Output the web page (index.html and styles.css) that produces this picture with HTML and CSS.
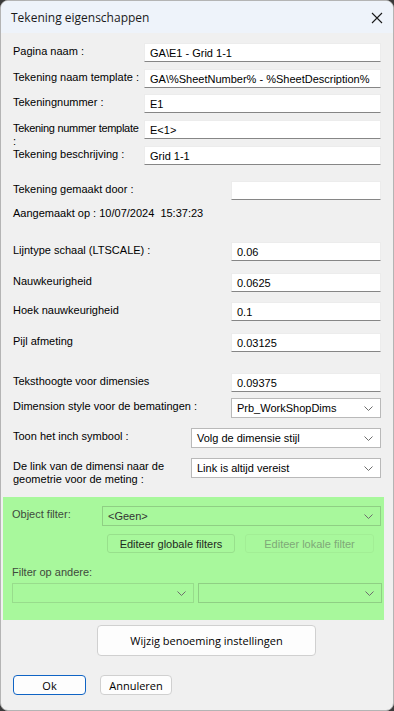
FILE: index.html
```html
<!DOCTYPE html>
<html>
<head>
	<meta charset="utf-8">
	<title>Tekening eigenschappen</title>
	<link rel="stylesheet" href="styles.css">
</head>
<body>
	<div class="window">
		<div class="titlebar">
			<span class="title">Tekening eigenschappen</span>
			<svg class="close" width="12" height="12" viewBox="0 0 12 12"><path d="M1 1L11 11M11 1L1 11"/></svg>
		</div>

		<div class="content">
			<!-- Pagina / tekening gegevens -->
			<div class="row wide first"><span class="label">Pagina naam :</span><div class="input">GA\E1 - Grid 1-1</div></div>
			<div class="row wide"><span class="label">Tekening naam template :</span><div class="input">GA\%SheetNumber% - %SheetDescription%</div></div>
			<div class="row wide tight"><span class="label">Tekeningnummer :</span><div class="input">E1</div></div>
			<div class="row wide"><span class="label"><span class="nowrap">Tekening nummer template</span><br>:</span><div class="input">E&lt;1&gt;</div></div>
			<div class="row wide"><span class="label">Tekening beschrijving :</span><div class="input">Grid 1-1</div></div>

			<div class="row narrow spaced"><span class="label">Tekening gemaakt door :</span><div class="input"></div></div>
			<div class="row info"><span class="label">Aangemaakt op : 10/07/2024&nbsp; 15:37:23</span></div>

			<!-- Dimensie instellingen -->
			<div class="row narrow spaced"><span class="label">Lijntype schaal (LTSCALE) :</span><div class="input">0.06</div></div>
			<div class="row narrow loose"><span class="label">Nauwkeurigheid</span><div class="input">0.0625</div></div>
			<div class="row narrow medium"><span class="label">Hoek nauwkeurigheid</span><div class="input">0.1</div></div>
			<div class="row narrow loose"><span class="label">Pijl afmeting</span><div class="input">0.03125</div></div>
			<div class="row narrow extra"><span class="label">Teksthoogte voor dimensies</span><div class="input">0.09375</div></div>
			<div class="row narrow tight tall"><span class="label">Dimension style voor de bematingen :</span>
				<div class="select boxed">Prb_WorkShopDims<svg class="chev" width="9" height="5" viewBox="0 0 9 5"><path d="M0.5 0.5L4.5 4.5L8.5 0.5"/></svg></div>
			</div>
			<div class="row mid medium tall"><span class="label">Toon het inch symbool :</span>
				<div class="select boxed">Volg de dimensie stijl<svg class="chev" width="9" height="5" viewBox="0 0 9 5"><path d="M0.5 0.5L4.5 4.5L8.5 0.5"/></svg></div>
			</div>
			<div class="row mid medium tall"><span class="label">De link van de dimensi naar de geometrie voor de meting :</span>
				<div class="select boxed">Link is altijd vereist<svg class="chev" width="9" height="5" viewBox="0 0 9 5"><path d="M0.5 0.5L4.5 4.5L8.5 0.5"/></svg></div>
			</div>

			<!-- Filters -->
			<div class="filters">
				<div class="filter-row">
					<span class="label">Object filter:</span>
					<div class="select green">&lt;Geen&gt;<svg class="chev" width="9" height="5" viewBox="0 0 9 5"><path d="M0.5 0.5L4.5 4.5L8.5 0.5"/></svg></div>
				</div>
				<div class="filter-buttons">
					<div class="gbtn">Editeer globale filters</div>
					<div class="gbtn disabled">Editeer lokale filter</div>
				</div>
				<div class="label other">Filter op andere:</div>
				<div class="filter-selects">
					<div class="select green faint"><svg class="chev" width="9" height="5" viewBox="0 0 9 5"><path d="M0.5 0.5L4.5 4.5L8.5 0.5"/></svg></div>
					<div class="select green"><svg class="chev" width="9" height="5" viewBox="0 0 9 5"><path d="M0.5 0.5L4.5 4.5L8.5 0.5"/></svg></div>
				</div>
			</div>

			<div class="btn big">Wijzig benoeming instellingen</div>

			<div class="actions">
				<div class="btn default">Ok</div>
				<div class="btn">Annuleren</div>
			</div>
		</div>
	</div>
</body>
</html>
```

FILE: styles.css
```css
body {
	margin: 0;
	padding: 0;
	background: #3a3a3a;
	font-family: Tahoma, "Liberation Sans", Arial, sans-serif;
	font-size: 11px;
	color: #000;
}

.window {
	width: 394px;
	height: 711px;
	box-sizing: border-box;
	border: 1px solid #b4b4b4;
	border-radius: 8px;
	background: #f0f0f0;
	overflow: hidden;
}

.titlebar {
	height: 32px;
	background: #eef3fa;
	display: flex;
	align-items: center;
	justify-content: space-between;
	padding: 0 10px 0 10px;
}

.title {
	font-family: "Open Sans", "Noto Sans", sans-serif;
	font-size: 12px;
	color: #1a1a1a;
}

.close {
	stroke: #1a1a1a;
	stroke-width: 1.1;
	margin-top: 1px;
}

.content {
	padding: 0 12px 0 12px;
}

/* vaste rijhoogte, labels mogen eronder uitlopen */
.row {
	display: grid;
	align-items: start;
	height: 19px;
	margin-top: 7px;
}

.row.tall { height: 20px; }

.row.first { margin-top: 10px; }
.row.tight { margin-top: 6px; }
.row.spaced { margin-top: 16px; }
.row.loose { margin-top: 12px; }
.row.medium { margin-top: 10px; }
.row.extra { margin-top: 21px; }

.row.wide { grid-template-columns: 131px 1fr; }
.row.narrow { grid-template-columns: 218px 1fr; }
.row.mid { grid-template-columns: 178px 1fr; }

.row.info {
	display: block;
}

.label {
	padding-top: 2px;
	line-height: 13px;
}

.nowrap {
	white-space: nowrap;
	letter-spacing: -0.3px;
}

.input {
	height: 19px;
	box-sizing: border-box;
	background: #fff;
	border: 1px solid #ececec;
	border-bottom: 1px solid #868686;
	padding: 3px 0 0 5px;
	line-height: 13px;
	white-space: nowrap;
	overflow: hidden;
}

.select {
	height: 20px;
	box-sizing: border-box;
	display: flex;
	align-items: center;
	justify-content: space-between;
	padding: 0 7px 0 5px;
	white-space: nowrap;
}

.select.boxed {
	background: #fff;
	border: 1px solid #b9b9b9;
}

.chev {
	fill: none;
	stroke: #6d6d6d;
	stroke-width: 1;
	margin-left: auto;
}

.filters {
	background: #a8f89c;
	margin: 19px -3px 0 -10px;
	padding: 9px 3px 17px 9px;
}

.filter-row {
	display: grid;
	grid-template-columns: 90px 1fr;
	align-items: start;
}

.filters .label {
	color: #3f4a3d;
}

.select.green {
	border: 1px solid #8fcf84;
	color: #333;
}

.select.green.faint {
	border-color: #98dc8c;
}

.filter-buttons {
	display: flex;
	gap: 10px;
	margin: 8px 0 0 95px;
}

.gbtn {
	width: 128px;
	height: 19px;
	box-sizing: border-box;
	border: 1px solid #98e08c;
	border-radius: 3px;
	display: flex;
	align-items: center;
	justify-content: center;
	color: #1e2a1c;
}

.gbtn.disabled {
	border-color: #a2ee95;
	color: #7fa878;
	width: 129px;
}

.other {
	margin-top: 11px;
}

.filter-selects {
	display: grid;
	grid-template-columns: 182px 184px;
	gap: 4px;
	margin-top: 4px;
}

.btn {
	height: 20px;
	box-sizing: border-box;
	background: #fdfdfd;
	border: 1px solid #d0d0d0;
	border-radius: 4px;
	display: flex;
	align-items: center;
	justify-content: center;
	font-family: "Open Sans", "Noto Sans", sans-serif;
	font-size: 11px;
	width: 72px;
}

.btn.big {
	width: 219px;
	height: 31px;
	margin: 5px 0 0 84px;
}

.btn.default {
	border: 1px solid #1064c4;
	width: 73px;
}

.actions {
	display: flex;
	gap: 14px;
	margin: 19px 0 0 0;
}
```
